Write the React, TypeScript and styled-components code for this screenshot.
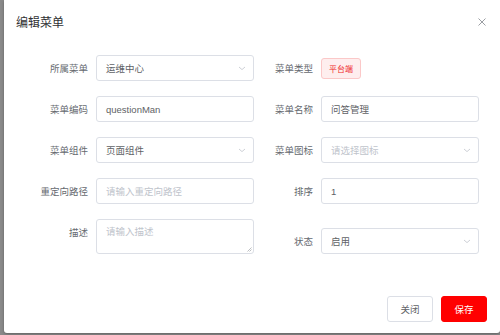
import React from 'react';
import styled, {createGlobalStyle} from "styled-components";

const GlobalStyle = createGlobalStyle`
    html, body {
        margin: 0;
        padding: 0;
        background: #8a8a8a;
        font-family: "Noto Sans CJK SC", "Liberation Sans", sans-serif;
    }
`

const Backdrop = styled.div`
    width: 500px;
    height: 335px;
    display: flex;
    align-items: flex-start;
    overflow: hidden;
    background: #8a8a8a;
`

const Dialog = styled.div`
    margin-left: 4px;
    flex: 1;
    height: 333px;
    background: #fff;
    border-radius: 0 0 3px 3px;
    box-shadow: 0 1px 3px rgba(0, 0, 0, 0.3);
    display: flex;
    flex-direction: column;
`

const Header = styled.div`
    display: flex;
    align-items: center;
    justify-content: space-between;
    padding: 13px 13px 0 12px;
    height: 17px;
`

const Title = styled.div`
    font-size: 12px;
    color: #303133;
`

const Close = styled.button`
    border: none;
    background: none;
    padding: 0;
    width: 10px;
    height: 10px;
    display: flex;
    align-items: center;
    justify-content: center;
    cursor: pointer;
`

const Form = styled.div`
    margin-top: 25px;
    display: grid;
    grid-template-columns: 250px 225px;
    row-gap: 15px;
`

type FieldProps = {
    $labelWidth: number;
    $end?: boolean;
}

const Field = styled.div<FieldProps>`
    display: grid;
    grid-template-columns: ${p => p.$labelWidth}px 158px;
    align-items: start;
    align-self: ${p => p.$end ? "end" : "start"};
`

const Label = styled.label`
    font-size: 9.5px;
    line-height: 26px;
    color: #666a70;
    text-align: right;
    padding-right: 8px;
`

const Box = styled.div`
    box-sizing: border-box;
    height: 26px;
    border: 1px solid #dcdfe6;
    border-radius: 3px;
    padding: 0 7px 0 9px;
    display: flex;
    align-items: center;
    justify-content: space-between;
    font-size: 9.5px;
    color: #606266;
    background: #fff;
`

const Value = styled.span<{ $placeholder?: boolean }>`
    color: ${p => p.$placeholder ? "#c0c4cc" : "#606266"};
    font-family: "Liberation Sans", "Noto Sans CJK SC", sans-serif;
`

const TextArea = styled.div`
    position: relative;
    box-sizing: border-box;
    height: 35px;
    border: 1px solid #dcdfe6;
    border-radius: 3px;
    padding: 4px 9px;
    font-size: 9.5px;
    line-height: 14px;
    color: #c0c4cc;
`

const Grip = styled.svg`
    position: absolute;
    right: 1px;
    bottom: 1px;
`

const Tag = styled.span`
    justify-self: start;
    margin-top: 3px;
    height: 21px;
    box-sizing: border-box;
    padding: 0 7px;
    display: inline-flex;
    align-items: center;
    font-size: 8px;
    color: #ee2a2a;
    background: #feeeee;
    border: 1px solid #fbc8c8;
    border-radius: 3px;
`

const Footer = styled.div`
    margin-top: auto;
    margin-bottom: 11px;
    padding-right: 13px;
    display: flex;
    justify-content: flex-end;
    gap: 8px;
`

type ButtonProps = {
    $primary?: boolean;
}

const Button = styled.button<ButtonProps>`
    width: 46px;
    height: 26px;
    border-radius: 3px;
    font-family: "Noto Sans CJK SC", sans-serif;
    font-size: 9.5px;
    cursor: pointer;
    border: 1px solid ${p => p.$primary ? "#ff0000" : "#dcdfe6"};
    background: ${p => p.$primary ? "#ff0000" : "#fff"};
    color: ${p => p.$primary ? "#fff" : "#606266"};
`

const Chevron = () => (
    <svg width="8" height="8" viewBox="0 0 8 8">
        <path d="M1 3 L4 5.6 L7 3" fill="none" stroke="#c0c4cc" strokeWidth="0.8"/>
    </svg>
)

const Select = ({value, placeholder}: { value?: string; placeholder?: string }) => (
    <Box>
        <Value $placeholder={!value}>{value || placeholder}</Value>
        <Chevron/>
    </Box>
)

const Input = ({value, placeholder}: { value?: string; placeholder?: string }) => (
    <Box>
        <Value $placeholder={!value}>{value || placeholder}</Value>
    </Box>
)

export default function App() {
    return (
        <>
            <GlobalStyle/>
            <Backdrop>
                <Dialog>
                    <Header>
                        <Title>编辑菜单</Title>
                        <Close aria-label="关闭">
                            <svg width="8" height="8" viewBox="0 0 8 8">
                                <path d="M0.5 0.5 L7.5 7.5 M7.5 0.5 L0.5 7.5" stroke="#909399" strokeWidth="0.9"/>
                            </svg>
                        </Close>
                    </Header>
                    <Form>
                        <Field $labelWidth={92}>
                            <Label>所属菜单</Label>
                            <Select value="运维中心"/>
                        </Field>
                        <Field $labelWidth={67}>
                            <Label>菜单类型</Label>
                            <Tag>平台端</Tag>
                        </Field>

                        <Field $labelWidth={92}>
                            <Label>菜单编码</Label>
                            <Input value="questionMan"/>
                        </Field>
                        <Field $labelWidth={67}>
                            <Label>菜单名称</Label>
                            <Input value="问答管理"/>
                        </Field>

                        <Field $labelWidth={92}>
                            <Label>菜单组件</Label>
                            <Select value="页面组件"/>
                        </Field>
                        <Field $labelWidth={67}>
                            <Label>菜单图标</Label>
                            <Select placeholder="请选择图标"/>
                        </Field>

                        <Field $labelWidth={92}>
                            <Label>重定向路径</Label>
                            <Input placeholder="请输入重定向路径"/>
                        </Field>
                        <Field $labelWidth={67}>
                            <Label>排序</Label>
                            <Input value="1"/>
                        </Field>

                        <Field $labelWidth={92}>
                            <Label>描述</Label>
                            <TextArea>
                                请输入描述
                                <Grip width="5" height="5" viewBox="0 0 5 5">
                                    <path d="M4.5 0.5 L0.5 4.5 M4.5 2.5 L2.5 4.5" stroke="#909399" strokeWidth="0.6"/>
                                </Grip>
                            </TextArea>
                        </Field>
                        <Field $labelWidth={67} $end>
                            <Label>状态</Label>
                            <Select value="启用"/>
                        </Field>
                    </Form>
                    <Footer>
                        <Button>关闭</Button>
                        <Button $primary>保存</Button>
                    </Footer>
                </Dialog>
            </Backdrop>
        </>
    );
}
